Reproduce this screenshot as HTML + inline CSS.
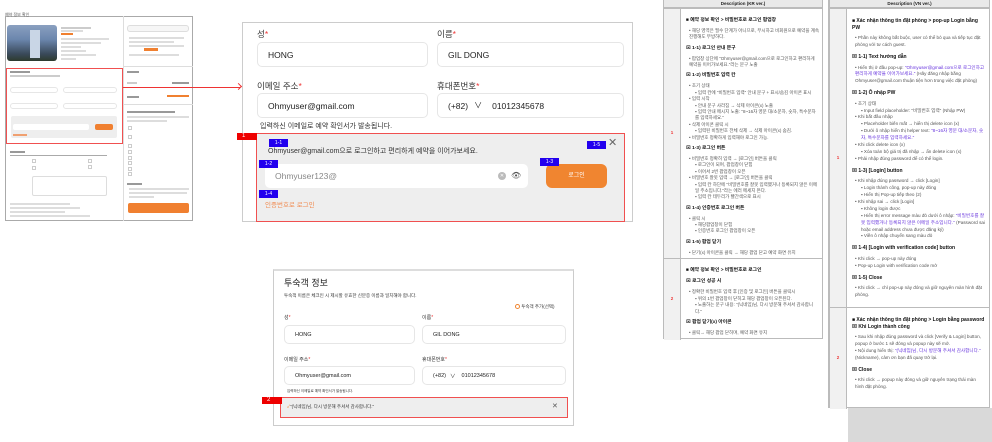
<!DOCTYPE html>
<html><head><meta charset="utf-8">
<style>
*{box-sizing:border-box;margin:0;padding:0}
body{width:992px;height:442px;overflow:hidden;background:#fff;font-family:"Liberation Sans","Noto Sans CJK KR",sans-serif;color:#222;position:relative}
.a{position:absolute}
.inp{position:absolute;border:1px solid #e6e6e6;border-radius:5px;background:#fff;font-size:9px;display:flex;align-items:center;padding-left:10px;color:#222}
.lbl{position:absolute;font-size:8.5px;color:#333}
.lbl b{color:#e33;font-weight:normal}
.tag{position:absolute;background:#2200ee;color:#fff;font-size:5px;text-align:center;line-height:8px;width:19px;height:8px}
.rtag{position:absolute;background:#e00;color:#fff;font-size:6px;padding-left:5px;line-height:7px;width:20px;height:7px}
.tbl{position:absolute;border:1px solid #bbb;font-size:4.5px;line-height:6.4px;color:#555}
.tbl .hd{height:8px;background:#e9e9e9;border-bottom:1px solid #bbb;text-align:center;font-weight:bold;font-size:4.5px;line-height:7px;color:#222}
.row{position:absolute;left:0;right:0;border-top:1px solid #bbb}
.num{position:absolute;left:0;top:0;bottom:0;width:17px;background:#f1f1f1;border-right:1px solid #bbb;color:#e33;font-weight:bold;font-size:4.5px;display:flex;align-items:center;justify-content:center}
.txt{position:absolute;left:22px;right:3px;top:4px}
.txt h4{font-size:4.8px;color:#111;margin:5px 0 3.5px}
.txt p{margin-left:3px}
.txt p.s{margin-left:9px}
.vn .txt{font-size:4.6px;line-height:6.9px}
.vn .txt h4{font-size:5px;margin:5px 0 3.5px}
.pu{color:#6633dd}
.sm{position:absolute;height:1.5px;background:#ccc}
</style></head><body>

<!-- left thumbnail -->
<div class="a" style="left:5px;top:16px;width:188px;height:205px;border:1px solid #aaa;background:#fff"></div>
<div class="a" style="left:5px;top:12px;font-size:4px;color:#555">예약 정보 확인</div>
<div class="a" style="left:123px;top:16px;width:1px;height:205px;background:#ddd"></div>
<div class="a" style="left:7px;top:25px;width:50px;height:36px;border-radius:3px;background:linear-gradient(180deg,#8aa0c0 0%,#6b86ad 40%,#3a4a5a 80%,#2d3a2d 100%)"></div>
<div class="a" style="left:30px;top:30px;width:10px;height:28px;background:#c9d6e6"></div>
<div class="sm" style="left:61px;top:27px;width:30px"></div>
<div class="sm" style="left:61px;top:30px;width:22px;background:#ddd"></div>
<div class="a" style="left:61px;top:33px;width:12px;height:2px;background:#f08030"></div>
<div class="sm" style="left:61px;top:38px;width:48px;background:#ddd"></div>
<div class="sm" style="left:61px;top:42px;width:40px;background:#ddd"></div>
<div class="sm" style="left:61px;top:46px;width:20px;background:#ddd"></div>
<div class="sm" style="left:61px;top:50px;width:25px;background:#ddd"></div>
<div class="sm" style="left:61px;top:54px;width:35px;background:#ddd"></div>
<div class="sm" style="left:61px;top:58px;width:15px;background:#ddd"></div>
<div class="a" style="left:6px;top:68px;width:117px;height:76px;border:1.5px solid #f05050"></div>
<div class="sm" style="left:10px;top:71px;width:20px;background:#999"></div>
<div class="sm" style="left:10px;top:75px;width:50px"></div>
<div class="inp" style="left:10px;top:87px;width:48px;height:6px;padding:0"></div>
<div class="inp" style="left:63px;top:87px;width:54px;height:6px;padding:0"></div>
<div class="inp" style="left:10px;top:103px;width:48px;height:6px;padding:0"></div>
<div class="inp" style="left:63px;top:103px;width:54px;height:6px;padding:0"></div>
<div class="a" style="left:11px;top:116px;width:106px;height:22px;background:#eee;border-radius:2px"></div>
<div class="a" style="left:13px;top:124px;width:76px;height:6px;background:#fff;border-radius:2px"></div>
<div class="a" style="left:95px;top:124px;width:18px;height:6px;background:#f08030;border-radius:2px"></div>
<div class="a" style="left:13px;top:134px;width:14px;height:1.5px;background:#f0a070"></div>
<div class="sm" style="left:10px;top:151px;width:15px;background:#999"></div>
<div class="a" style="left:10px;top:155px;width:97px;height:1px;background:#aaa"></div>
<div class="a" style="left:32px;top:159px;width:4px;height:4px;border:1px solid #ccc"></div>
<div class="a" style="left:32px;top:166px;width:4px;height:4px;border:1px solid #ccc"></div>
<div class="a" style="left:88px;top:159px;width:4px;height:4px;border:1px solid #ccc"></div>
<div class="a" style="left:88px;top:165px;width:4px;height:4px;border:1px solid #ccc"></div>
<div class="a" style="left:32px;top:176px;width:75px;height:20px;border:1px solid #ddd;border-radius:2px"></div>
<div class="sm" style="left:10px;top:203px;width:60px;background:#ddd"></div>
<div class="sm" style="left:10px;top:207px;width:70px;background:#ddd"></div>
<div class="sm" style="left:10px;top:211px;width:55px;background:#ddd"></div>
<div class="sm" style="left:10px;top:215px;width:80px;background:#ddd"></div>
<div class="a" style="left:127px;top:25px;width:62px;height:7px;border:1px solid #ddd;border-radius:3px;background:#f6f6f6"></div>
<div class="sm" style="left:129px;top:37px;width:55px;background:#ddd"></div>
<div class="sm" style="left:129px;top:41px;width:45px;background:#ddd"></div>
<div class="sm" style="left:129px;top:45px;width:55px;background:#ddd"></div>
<div class="a" style="left:144px;top:48px;width:14px;height:3px;background:#f08030"></div>
<div class="sm" style="left:129px;top:54px;width:50px;background:#ddd"></div>
<div class="a" style="left:124px;top:66px;width:69px;height:1px;background:#ddd"></div>
<div class="sm" style="left:127px;top:71px;width:12px;background:#999"></div>
<div class="sm" style="left:127px;top:82px;width:10px;background:#ccc"></div>
<div class="sm" style="left:172px;top:82px;width:17px;background:#999"></div>
<div class="sm" style="left:127px;top:96px;width:12px;background:#999"></div>
<div class="a" style="left:167px;top:95px;width:22px;height:2px;background:#f08030"></div>
<div class="a" style="left:124px;top:104px;width:69px;height:1px;background:#ddd"></div>
<div class="sm" style="left:127px;top:111px;width:48px;background:#999"></div>
<div class="sm" style="left:127px;top:116px;width:62px;background:#ddd"></div>
<div class="sm" style="left:127px;top:120px;width:40px;background:#ddd"></div>
<div class="a" style="left:128px;top:126px;width:4px;height:4px;border:1px solid #ccc"></div>
<div class="a" style="left:128px;top:135px;width:4px;height:4px;border:1px solid #ccc"></div>
<div class="a" style="left:128px;top:144px;width:4px;height:4px;border:1px solid #ccc"></div>
<div class="a" style="left:128px;top:150px;width:4px;height:4px;border:1px solid #ccc"></div>
<div class="a" style="left:128px;top:156px;width:4px;height:4px;border:1px solid #ccc"></div>
<div class="a" style="left:128px;top:161px;width:4px;height:4px;border:1px solid #ccc"></div>
<div class="a" style="left:128px;top:167px;width:4px;height:4px;border:1px solid #ccc"></div>
<div class="a" style="left:128px;top:172px;width:4px;height:4px;border:1px solid #ccc"></div>
<div class="sm" style="left:127px;top:183px;width:15px;background:#999"></div>
<div class="sm" style="left:129px;top:188px;width:60px;background:#ddd"></div>
<div class="sm" style="left:129px;top:192px;width:58px;background:#ddd"></div>
<div class="sm" style="left:129px;top:196px;width:25px;background:#ddd"></div>
<div class="a" style="left:128px;top:203px;width:61px;height:10px;background:#f08030;border-radius:2px"></div>
<!-- arrow line -->
<div class="a" style="left:123px;top:87px;width:117px;height:1px;background:#e33"></div>
<div class="a" style="left:236px;top:84px;width:5px;height:5px;border-top:1px solid #e33;border-right:1px solid #e33;transform:rotate(45deg)"></div>

<!-- middle popup -->
<div class="a" style="left:242px;top:22px;width:391px;height:200px;border:1px solid #ccc"></div>
<div class="lbl" style="left:257px;top:28px">성<b>*</b></div>
<div class="lbl" style="left:437px;top:28px">이름<b>*</b></div>
<div class="inp" style="left:257px;top:42px;width:171px;height:25px;font-size:8.5px">HONG</div>
<div class="inp" style="left:437px;top:42px;width:187px;height:25px;font-size:8.5px">GIL DONG</div>
<div class="lbl" style="left:257px;top:80px">이메일 주소<b>*</b></div>
<div class="lbl" style="left:437px;top:80px">휴대폰번호<b>*</b></div>
<div class="inp" style="left:257px;top:93px;width:171px;height:25px;font-size:8.5px">Ohmyuser@gmail.com</div>
<div class="inp" style="left:437px;top:93px;width:187px;height:25px;font-size:8.5px">(+82) <span style="margin:0 10px 0 6px;font-size:8px">∨</span> 01012345678</div>
<div class="a" style="left:260px;top:121px;font-size:7px;color:#333">입력하신 이메일로 예약 확인서가 발송됩니다.</div>
<div class="a" style="left:256px;top:133px;width:369px;height:89px;border:1.5px solid #f05050;background:#eee"></div>
<div class="rtag" style="left:237px;top:133px">1</div>
<div class="a" style="left:268px;top:146px;font-size:7px;color:#333">Ohmyuser@gmail.com으로 로그인하고 편리하게 예약을 이어가보세요.</div>
<div class="a" style="left:608px;top:138px;font-size:11px;color:#666;line-height:10px">✕</div>
<div class="inp" style="left:265px;top:164px;width:263px;height:24px;font-size:8.5px;color:#888;border:none">Ohmyuser123@</div>
<div class="a" style="left:498px;top:172px;width:8px;height:8px;border-radius:50%;background:#bbb;color:#fff;font-size:5px;text-align:center;line-height:8px">✕</div>
<div class="a" style="left:511px;top:171px;font-size:8px;color:#555">👁</div>
<div class="a" style="left:546px;top:164px;width:61px;height:24px;background:#f08530;border-radius:6px;color:#fff;font-size:6px;text-align:center;line-height:24px">로그인</div>
<div class="a" style="left:265px;top:199px;font-size:6.5px;color:#f08a50">인증번호로 로그인</div>
<div class="tag" style="left:269px;top:139px">1-1</div>
<div class="tag" style="left:259px;top:160px">1-2</div>
<div class="tag" style="left:540px;top:158px">1-3</div>
<div class="tag" style="left:259px;top:190px">1-4</div>
<div class="tag" style="left:587px;top:141px">1-5</div>

<!-- bottom panel -->
<div class="a" style="left:273px;top:269px;width:301px;height:157px;border:1px solid #ccc;border-top:2px solid #ddd"></div>
<div class="a" style="left:284px;top:276px;font-size:9px;color:#222">투숙객 정보</div>
<div class="a" style="left:284px;top:293px;font-size:4.5px;color:#333">투숙객 이름은 체크인 시 제시할 유효한 신분증 이름과 일치해야 합니다.</div>
<div class="a" style="left:515px;top:304px;font-size:4.5px;color:#333"><span style="display:inline-block;width:5px;height:5px;border:1px solid #f08530;border-radius:50%;vertical-align:middle"></span> 투숙객 추가(선택)</div>
<div class="lbl" style="left:284px;top:314px;font-size:5px">성<b>*</b></div>
<div class="lbl" style="left:422px;top:314px;font-size:5px">이름<b>*</b></div>
<div class="inp" style="left:284px;top:325px;width:131px;height:19px;font-size:5.5px">HONG</div>
<div class="inp" style="left:422px;top:325px;width:144px;height:19px;font-size:5.5px">GIL DONG</div>
<div class="lbl" style="left:284px;top:356px;font-size:5px">이메일 주소<b>*</b></div>
<div class="lbl" style="left:422px;top:356px;font-size:5px">휴대폰번호<b>*</b></div>
<div class="inp" style="left:284px;top:366px;width:131px;height:19px;font-size:5.5px">Ohmyuser@gmail.com</div>
<div class="inp" style="left:422px;top:366px;width:144px;height:19px;font-size:5.5px">(+82) <span style="margin:0 6px 0 4px">∨</span> 01012345678</div>
<div class="a" style="left:287px;top:389px;font-size:3.5px;color:#333">입력하신 이메일로 예약 확인서가 발송됩니다.</div>
<div class="a" style="left:280px;top:397px;width:288px;height:21px;border:1.5px solid #f05050;background:#eee"></div>
<div class="rtag" style="left:262px;top:397px">2</div>
<div class="a" style="left:287px;top:404px;font-size:4.5px;color:#333"><span style="color:#f08530">✓</span>"(닉네임)님, 다시 방문해 주셔서 감사합니다."</div>
<div class="a" style="left:552px;top:402px;font-size:7px;color:#555">✕</div>

<!-- KR table -->
<div class="tbl" style="left:663px;top:-1px;width:160px;height:340px">
<div class="hd">Description (KR ver.)</div>
<div class="row" style="top:8px;height:250px"><div class="num">1</div><div class="txt">
<h4>■ 예약 정보 확인 &gt; 비밀번호로 로그인 팝업창</h4>
<p>• 해당 영역은 필수 단계가 아니므로, 무시하고 비회원으로 예약을 계속 진행해도 무방하다.</p>
<h4>⊠ 1-1) 로그인 안내 문구</h4>
<p>• 팝업창 상단에 "Ohmyuser@gmail.com으로 로그인하고 편리하게 예약을 이어가보세요."라는 문구 노출</p>
<h4>⊠ 1-2) 비밀번호 입력 칸</h4>
<p>• 초기 상태</p><p class="s">▪ 입력 칸에 "비밀번호 입력" 안내 문구 + 표시/숨김 아이콘 표시</p>
<p>• 입력 시작</p><p class="s">▪ 안내 문구 사라짐 → 삭제 아이콘(x) 노출</p><p class="s">▪ 입력 안내 메시지 노출: "8~16자 영문 대/소문자, 숫자, 특수문자를 입력하세요."</p>
<p>• 삭제 아이콘 클릭 시</p><p class="s">▪ 입력된 비밀번호 전체 삭제 → 삭제 아이콘(x) 숨김.</p>
<p>• 비밀번호 정확하게 입력해야 로그인 가능.</p>
<h4>⊠ 1-3) 로그인 버튼</h4>
<p>• 비밀번호 정확히 입력 → [로그인] 버튼을 클릭</p><p class="s">▪ 로그인이 되며, 팝업창이 닫힘</p><p class="s">▪ 이어서 2번 팝업창이 오픈</p>
<p>• 비밀번호 잘못 입력 → [로그인] 버튼을 클릭</p><p class="s">▪ 입력 칸 하단에 "비밀번호를 잘못 입력했거나 등록되지 않은 이메일 주소입니다."라는 에러 메세지 뜬다.</p><p class="s">▪ 입력 칸 테두리가 빨간색으로 표시</p>
<h4>⊠ 1-4) 인증번호 로그인 버튼</h4>
<p>• 클릭 시</p><p class="s">▪ 해당팝업창이 닫힘</p><p class="s">▪ 인증번호 로그인 팝업창이 오픈</p>
<h4>⊠ 1-5) 팝업 닫기</h4>
<p>• 닫기(x) 아이콘을 클릭 → 해당 팝업 닫고 예약 화면 유지</p>
</div></div>
<div class="row" style="top:258px;height:82px"><div class="num">2</div><div class="txt">
<h4>■ 예약 정보 확인 &gt; 비밀번호로 로그인</h4>
<h4>⊠ 로그인 성공 시</h4>
<p>• 정확한 비밀번호 입력 후 [인증 및 로그인] 버튼을 클릭시</p><p class="s">▪ 위의 1번 팝업창이 닫히고 해당 팝업창이 오픈된다.</p><p class="s">▪ 노출하는 문구 내용: "(닉네임)님, 다시 방문해 주셔서 감사합니다."</p>
<h4>⊠ 팝업 닫기(x) 아이콘</h4>
<p>• 클릭→ 해당 팝업 닫히며, 예약 화면 유지</p>
</div></div>
</div>

<!-- right gray -->
<div class="a" style="left:848px;top:408px;width:144px;height:34px;background:#d9d9d9"></div>
<div class="a" style="left:828px;top:0;width:1px;height:408px;background:#bbb"></div>

<!-- VN table -->
<div class="tbl vn" style="left:829px;top:-1px;width:161px;height:409px">
<div class="hd">Description (VN ver.)</div>
<div class="row" style="top:8px;height:299px"><div class="num">1</div><div class="txt">
<h4>■ Xác nhận thông tin đặt phòng &gt; pop-up Login bằng PW</h4>
<p>• Phần này không bắt buộc, user có thể bỏ qua và tiếp tục đặt phòng với tư cách guest.</p>
<h4>⊠ 1-1) Text hướng dẫn</h4>
<p>• Hiển thị ở đầu pop-up: <span class="pu">"Ohmyuser@gmail.com으로 로그인하고 편리하게 예약을 이어가보세요."</span> (Hãy đăng nhập bằng Ohmyuser@gmail.com thuận tiện hơn trong việc đặt phòng)</p>
<h4>⊠ 1-2) Ô nhập PW</h4>
<p>• 초기 상태</p><p class="s">▪ Input field placeholder: "비밀번호 입력" (Nhập PW)</p>
<p>• Khi bắt đầu nhập</p><p class="s">▪ Placeholder biến mất → hiển thị delete icon (x)</p><p class="s">▪ Dưới ô nhập hiển thị helper text: <span class="pu">"8~16자 영문 대/소문자, 숫자, 특수문자를 입력하세요."</span></p>
<p>• Khi click delete icon (x)</p><p class="s">▪ Xóa toàn bộ giá trị đã nhập → ẩn delete icon (x)</p>
<p>• Phải nhập đúng password để có thể login.</p>
<h4>⊠ 1-3) [Login] button</h4>
<p>• Khi nhập đúng password → click [Login]</p><p class="s">▪ Login thành công, pop-up này đóng</p><p class="s">▪ Hiển thị Pop-up tiếp theo (2)</p>
<p>• Khi nhập sai → click [Login]</p><p class="s">▪ Không login được</p><p class="s">▪ Hiển thị error message màu đỏ dưới ô nhập: <span class="pu">"비밀번호를 잘못 입력했거나 등록되지 않은 이메일 주소입니다."</span> (Password sai hoặc email address chưa được đăng ký)</p><p class="s">▪ Viền ô nhập chuyển sang màu đỏ</p>
<h4>⊠ 1-4) [Login with verification code] button</h4>
<p>• Khi click → pop-up này đóng</p><p>• Pop-up Login with verification code mở</p>
<h4>⊠ 1-5) Close</h4>
<p>• Khi click → chỉ pop-up này đóng và giữ nguyên màn hình đặt phòng.</p>
</div></div>
<div class="row" style="top:307px;height:102px"><div class="num">2</div><div class="txt">
<h4>■ Xác nhận thông tin đặt phòng &gt; Login bằng password<br>⊠ Khi Login thành công</h4>
<p>• Sau khi nhập đúng password và click [Verify &amp; Login] button, popup ở bước 1 sẽ đóng và popup này sẽ mở.</p>
<p>• Nội dung hiển thị: <span class="pu">"(닉네임)님, 다시 방문해 주셔서 감사합니다."</span> (Nickname), cảm ơn bạn đã quay trở lại.</p>
<h4>⊠ Close</h4>
<p>• Khi click → popup này đóng và giữ nguyên trạng thái màn hình đặt phòng.</p>
</div></div>
</div>
</body></html>
